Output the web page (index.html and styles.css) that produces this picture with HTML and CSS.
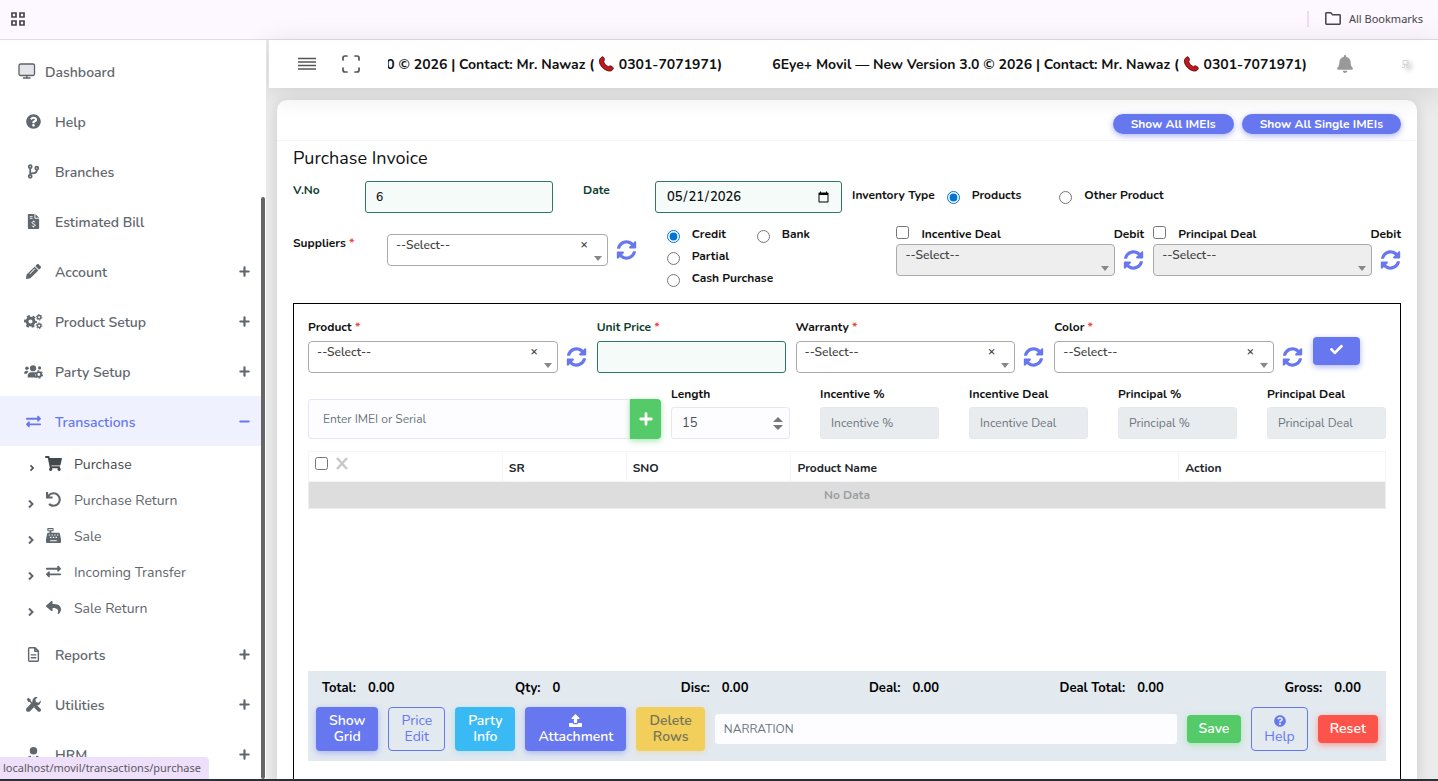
FILE: index.html
```
<!DOCTYPE html>
<html lang="en">
<head>
    <meta charset="UTF-8">
    <meta name="viewport" content="width=device-width, initial-scale=1.0">
    <title>Purchase Invoice</title>
    <link rel="stylesheet" href="styles.css">
</head>
<body>
    <!-- icon sprite -->
    <svg class="sprite" aria-hidden="true">
        <symbol id="i-help" viewBox="0 0 512 512"><path d="M504 256c0 136.997-111.043 248-248 248S8 392.997 8 256C8 119.083 119.043 8 256 8s248 111.083 248 248zM262.655 90c-54.497 0-89.255 22.957-116.549 63.758-3.536 5.286-2.353 12.415 2.715 16.258l34.699 26.31c5.205 3.947 12.621 3.008 16.665-2.122 17.864-22.658 30.113-35.797 57.303-35.797 20.429 0 45.698 13.148 45.698 32.958 0 14.976-12.363 22.667-32.534 33.976C247.128 238.528 216 254.941 216 296v4c0 6.627 5.373 12 12 12h56c6.627 0 12-5.373 12-12v-1.333c0-28.462 83.186-29.647 83.186-106.667 0-58.002-60.165-102-116.531-102zM256 338c-25.365 0-46 20.635-46 46 0 25.364 20.635 46 46 46s46-20.636 46-46c0-25.365-20.635-46-46-46z"/></symbol>
        <symbol id="i-branch" viewBox="0 0 16 16"><g fill="none" stroke="currentColor" stroke-width="1.9"><circle cx="4.5" cy="2.9" r="1.6"/><circle cx="4.5" cy="13.1" r="1.6"/><circle cx="11.5" cy="4.4" r="1.6"/><path d="M4.5 4.5v7M11.5 6v.8c0 2.4-1.500 2.700-3.500 2.900-1.800.2-3.500.4-3.500 1.800"/></g></symbol>
        <symbol id="i-bill" viewBox="0 0 384 512"><path fill-rule="evenodd" d="M24 0h200v136c0 13 11 24 24 24h136v328c0 13-11 24-24 24H24c-13 0-24-11-24-24V24C0 11 11 0 24 0zM64 64v32h96V64zm0 64v32h96v-32z"/><path d="M256 0v128h128L263 6z"/><path fill="none" stroke="#fff" stroke-width="32" d="M250 275c-20-18-110-28-110 22 0 58 110 30 110 86 0 52-90 44-116 22M192 224v32m0 168v32"/></symbol>
        <symbol id="i-pencil" viewBox="0 0 512 512"><path d="M497.900 142.100l-46.100 46.100c-4.700 4.700-12.300 4.700-17 0l-111-111c-4.700-4.700-4.700-12.300 0-17l46.100-46.100c18.700-18.700 49.100-18.700 67.900 0l60.100 60.100c18.800 18.700 18.800 49.100 0 67.900zM284.200 99.800L21.600 362.400.4 483.900c-2.900 16.400 11.400 30.600 27.800 27.800l121.500-21.300 262.600-262.600c4.700-4.700 4.700-12.300 0-17l-111-111c-4.800-4.700-12.400-4.700-17.100 0zM124.100 339.900c-5.500-5.500-5.500-14.300 0-19.800l154-154c5.500-5.500 14.300-5.500 19.800 0s5.500 14.300 0 19.800l-154 154c-5.500 5.500-14.300 5.500-19.800 0z"/></symbol>
        <symbol id="i-cogs" viewBox="0 0 20 16"><g fill="none" stroke="currentColor"><circle cx="6.800" cy="8" r="3.700" stroke-width="3"/><circle cx="6.800" cy="8" r="5.900" stroke-width="2" stroke-dasharray="3.100 3.080" stroke-dashoffset="1.500"/><circle cx="16" cy="3.500" r="1.900" stroke-width="1.500"/><circle cx="16" cy="3.500" r="3" stroke-width="1" stroke-dasharray="1.570 1.570"/><circle cx="16" cy="12.500" r="1.900" stroke-width="1.500"/><circle cx="16" cy="12.500" r="3" stroke-width="1" stroke-dasharray="1.570 1.570"/></g></symbol>
        <symbol id="i-users" viewBox="0 0 20 16"><circle cx="3" cy="4.600" r="1.900"/><circle cx="9.500" cy="4.500" r="3.300"/><circle cx="16.500" cy="4.200" r="1.700"/><path d="M0 10.500c0-2 1-3.200 2.500-3.200 1 0 1.800.2 2.300.7C3.500 9 3 10 2.800 10.500zM3.800 14.500v-1.700c0-2.400 1.500-3.900 3.700-3.900h3c.5 0 .9.100 1.300.2-.7 2 0 4.300 2 5.400z"/><circle cx="15.700" cy="11.200" r="2.500" fill="none" stroke="currentColor" stroke-width="2"/><circle cx="15.700" cy="11.200" r="3.900" fill="none" stroke="currentColor" stroke-width="1.200" stroke-dasharray="2.040 2.040"/></symbol>
        <symbol id="i-exchange" viewBox="0 0 512 512"><path d="M0 168v-16c0-13.255 10.745-24 24-24h360V80c0-21.367 25.899-32.042 40.971-16.971l80 80c9.372 9.373 9.372 24.569 0 33.941l-80 80C409.956 271.982 384 261.456 384 240v-48H24c-13.255 0-24-10.745-24-24zm488 152H128v-48c0-21.314-25.862-32.080-40.971-16.971l-80 80c-9.372 9.373-9.372 24.569 0 33.941l80 80C102.057 463.997 128 453.437 128 432v-48h360c13.255 0 24-10.745 24-24v-16c0-13.255-10.745-24-24-24z"/></symbol>
        <symbol id="i-cart" viewBox="0 0 576 512"><path d="M528.120 301.319l47.273-208C578.806 78.301 567.391 64 551.990 64H159.208l-9.166-44.810C147.758 8.021 137.930 0 126.529 0H24C10.745 0 0 10.745 0 24v16c0 13.255 10.745 24 24 24h69.883l70.248 343.435C147.325 417.100 136 435.222 136 456c0 30.928 25.072 56 56 56s56-25.072 56-56c0-15.674-6.447-29.835-16.824-40h209.647C430.447 426.165 424 440.326 424 456c0 30.928 25.072 56 56 56s56-25.072 56-56c0-22.172-12.888-41.332-31.579-50.405l5.517-24.276c3.413-15.018-8.002-29.319-23.403-29.319H218.117l-6.545-32h293.145c11.206 0 20.920-7.754 23.403-18.681z"/></symbol>
        <symbol id="i-undo" viewBox="0 0 512 512"><path d="M212.333 224.333H12c-6.627 0-12-5.373-12-12V12C0 5.373 5.373 0 12 0h48c6.627 0 12 5.373 12 12v78.112C117.773 39.279 184.260 7.470 258.175 8.007c136.906.994 246.448 111.623 246.157 248.532C504.041 393.258 393.120 504 256.333 504c-64.089 0-122.496-24.313-166.510-64.215-5.099-4.622-5.334-12.554-.467-17.420l33.967-33.967c4.474-4.474 11.662-4.717 16.401-.525C170.760 415.336 211.580 432 256.333 432c97.268 0 176-78.716 176-176 0-97.267-78.716-176-176-176-58.496 0-110.280 28.476-142.274 72.333h98.274c6.627 0 12 5.373 12 12v48c0 6.627-5.373 12-12 12z"/></symbol>
        <symbol id="i-register" viewBox="0 0 16 16"><path fill-rule="evenodd" d="M1.500 0h6.500v3.500H5.800V5h7.700c.7 0 1.200.5 1.300 1.200L16 12v3c0 .6-.4 1-1 1H1c-.6 0-1-.4-1-1v-3l1.200-5.800C1.300 5.500 1.800 5 2.500 5h1.300V3.500H1.500zM2.500 1.200v1.100H7V1.200zM3 6.800v1.300h1.400V6.800zm2.900 0v1.300h1.400V6.800zm2.900 0v1.300h1.400V6.800zm2.900 0v1.300h1.400V6.800zM4.400 9.400v1.300h1.400V9.400zm2.900 0v1.300h1.400V9.400zm2.900 0v1.300h1.400V9.400zM4.500 13v1h7v-1z"/></symbol>
        <symbol id="i-reply" viewBox="0 0 512 512"><path d="M8.309 189.836L184.313 37.851C199.719 24.546 224 35.347 224 56.015v80.053c160.629 1.839 288 34.032 288 186.258 0 61.441-39.581 122.309-83.333 154.132-13.653 9.931-33.111-2.533-28.077-18.631 45.344-145.012-21.507-183.510-176.590-185.742V360c0 20.700-24.300 31.453-39.687 18.164l-176.004-152c-11.071-9.562-11.086-26.753 0-36.328z"/></symbol>
        <symbol id="i-file" viewBox="0 0 12 16"><path fill="none" stroke="currentColor" stroke-width="1.500" stroke-linejoin="round" d="M1.800.8h5.900l3.500 3.500v9.900c0 .6-.4 1-1 1H1.800c-.6 0-1-.4-1-1V1.800c0-.6.4-1 1-1zM7.400.8v3.800h3.800M3 8.400h6M3 11.400h6"/></symbol>
        <symbol id="i-tools" viewBox="0 0 16 16"><path d="M.8 2.300L2.300.8 5 2.700v1.600l2.900 2.900-1 1L4 5.300H2.600zM9.600 8.800l1.600-.6 4.200 4.200c.8.8.8 2 0 2.800s-2 .8-2.800 0L8.600 11.200z"/><path d="M15.700 3.600L13.400 6l-2.700-.7L10 2.600 12.400.3c-1.600-.5-3.400-.1-4.500 1.200-1 1-1.300 2.500-1 3.800L.7 11.600c-.9.900-.9 2.400 0 3.500 1 1 2.600 1 3.600 0l6.200-6.200c1.400.4 2.900 0 3.900-1 1.200-1.200 1.700-2.800 1.300-4.300z"/></symbol>
        <symbol id="i-user" viewBox="0 0 14 16"><circle cx="7" cy="4" r="4"/><path d="M4 9.200L6.300 15l.5-3.200L6 10.400h2l-.8 1.400.5 3.200L10 9.200c2.400.1 4 1.800 4 4.100v1.200c0 .8-.7 1.500-1.500 1.500h-11C.7 16 0 15.300 0 14.500v-1.200c0-2.300 1.600-4 4-4.100z"/></symbol>
        <symbol id="i-bell" viewBox="0 0 448 512"><path d="M224 512c35.320 0 63.970-28.650 63.970-64H160.030c0 35.350 28.650 64 63.970 64zm215.390-149.710c-19.320-20.760-55.470-51.990-55.470-154.290 0-77.700-54.480-139.900-127.940-155.160V32c0-17.670-14.320-32-31.980-32s-31.980 14.330-31.980 32v20.840C118.560 68.100 64.080 130.300 64.080 208c0 102.300-36.150 133.530-55.470 154.290-6 6.450-8.660 14.160-8.610 21.710.11 16.400 12.980 32 32.100 32h383.800c19.120 0 32-15.600 32.100-32 .05-7.550-2.610-15.270-8.610-21.710z"/></symbol>
        <symbol id="i-sync" viewBox="0 0 512 512"><path d="M370.720 133.280C339.458 104.008 298.888 87.962 255.848 88c-77.458.068-144.328 53.178-162.791 126.850-1.344 5.363-6.122 9.150-11.651 9.150H24.103c-7.498 0-13.194-6.807-11.807-14.176C33.933 94.924 134.813 8 256 8c66.448 0 126.791 26.136 171.315 68.685L463.030 40.970C478.149 25.851 504 36.559 504 57.941V192c0 13.255-10.745 24-24 24H345.941c-21.382 0-32.090-25.851-16.971-40.971l41.750-41.749zM32 296h134.059c21.382 0 32.090 25.851 16.971 40.971l-41.750 41.750c31.262 29.273 71.835 45.319 114.876 45.280 77.418-.070 144.315-53.144 162.787-126.849 1.344-5.363 6.122-9.150 11.651-9.150h57.304c7.498 0 13.194 6.807 11.807 14.176C478.067 417.076 377.187 504 256 504c-66.448 0-126.791-26.136-171.315-68.685L48.970 471.030C33.851 486.149 8 475.441 8 454.059V320c0-13.255 10.745-24 24-24z"/></symbol>
        <symbol id="i-check" viewBox="0 0 512 512"><path d="M173.898 439.404l-166.400-166.400c-9.997-9.997-9.997-26.206 0-36.204l36.203-36.204c9.997-9.998 26.207-9.998 36.204 0L192 312.690 432.095 72.596c9.997-9.997 26.207-9.997 36.204 0l36.203 36.204c9.997 9.997 9.997 26.206 0 36.204l-294.400 294.401c-9.998 9.997-26.207 9.997-36.204-.001z"/></symbol>
        <symbol id="i-plus" viewBox="0 0 12 12"><path fill="none" stroke="currentColor" stroke-width="2.400" stroke-linecap="round" d="M6 1.500v9M1.500 6h9"/></symbol>
        <symbol id="i-minus" viewBox="0 0 12 12"><path fill="none" stroke="currentColor" stroke-width="2.400" stroke-linecap="round" d="M1.500 6h9"/></symbol>
        <symbol id="i-chevron" viewBox="0 0 8 10"><path fill="none" stroke="currentColor" stroke-width="2" d="M2 1.500L5.500 5 2 8.500"/></symbol>
        <symbol id="i-upload" viewBox="0 0 16 16"><path d="M8 0l4.800 4.900c.4.400.1 1.100-.5 1.100H10v4.300c0 .4-.3.700-.7.700H6.700c-.4 0-.7-.3-.7-.7V6H3.700c-.6 0-.9-.7-.5-1.100zM1 11h3.800c.1 1 .9 1.500 1.900 1.500h2.600c1 0 1.800-.5 1.900-1.500H15c.6 0 1 .4 1 1v3c0 .6-.4 1-1 1H1c-.6 0-1-.4-1-1v-3c0-.6.4-1 1-1z"/></symbol>
        <symbol id="i-phone" viewBox="0 0 16 16"><path fill="#c4161c" stroke="#3a0a0a" stroke-width=".8" d="M3.800.8c.8-.5 1.700.9 2.100 2.100.4 1.100-.1 1.700-.8 2.300.5 2.600 2.700 4.800 5.100 5.500.7-.8 1.400-1.100 2.400-.6 1.200.6 2.700 1.700 2.200 2.600-.8 1.700-2.400 2.600-4.500 2.300C5.400 14.200.9 9.200.9 5.200.9 3.300 2 1.700 3.800.8z"/></symbol>
    </svg>

    <header class="bookmarks-bar">
        <svg class="apps-icon" viewBox="0 0 14 14"><path fill="none" stroke="#47454a" stroke-width="1.700" d="M1 1h4v4H1zM9 1h4v4H9zM1 9h4v4H1zM9 9h4v4H9z"/></svg>
        <a href="#" class="all-bookmarks">
            <svg viewBox="0 0 16 13"><path fill="none" stroke="#47454a" stroke-width="1.500" stroke-linejoin="round" d="M.8 11.500V1.500c0-.4.300-.7.700-.7h4.300l1.800 2h6.900c.4 0 .7.300.7.700v8c0 .4-.3.700-.7.700h-13c-.4 0-.7-.3-.7-.7z"/></svg>
            All Bookmarks
        </a>
    </header>

    <div class="app">
        <aside class="sidebar">
            <nav class="menu">
                <a href="#" class="menu-item dashboard">
                    <svg viewBox="0 0 18 16"><rect x="1" y="1" width="15.500" height="11.500" rx="1.500" fill="#e4e5e9" stroke="#5c6166" stroke-width="1.300"/><path stroke="#5c6166" stroke-width="1.300" d="M8.800 12.500V15M5 15h7.500"/></svg>
                    <span>Dashboard</span>
                </a>
                <a href="#" class="menu-item"><svg><use href="#i-help"/></svg><span>Help</span></a>
                <a href="#" class="menu-item"><svg><use href="#i-branch"/></svg><span>Branches</span></a>
                <a href="#" class="menu-item"><svg><use href="#i-bill"/></svg><span>Estimated Bill</span></a>
                <a href="#" class="menu-item"><svg><use href="#i-pencil"/></svg><span>Account</span><svg class="toggle"><use href="#i-plus"/></svg></a>
                <a href="#" class="menu-item"><svg><use href="#i-cogs"/></svg><span>Product Setup</span><svg class="toggle"><use href="#i-plus"/></svg></a>
                <a href="#" class="menu-item"><svg><use href="#i-users"/></svg><span>Party Setup</span><svg class="toggle"><use href="#i-plus"/></svg></a>
                <a href="#" class="menu-item active"><svg><use href="#i-exchange"/></svg><span>Transactions</span><svg class="toggle"><use href="#i-minus"/></svg></a>
                <div class="submenu">
                    <a href="#" class="hovered"><svg class="chevron"><use href="#i-chevron"/></svg><svg><use href="#i-cart"/></svg><span>Purchase</span></a>
                    <a href="#"><svg class="chevron"><use href="#i-chevron"/></svg><svg><use href="#i-undo"/></svg><span>Purchase Return</span></a>
                    <a href="#"><svg class="chevron"><use href="#i-chevron"/></svg><svg><use href="#i-register"/></svg><span>Sale</span></a>
                    <a href="#"><svg class="chevron"><use href="#i-chevron"/></svg><svg><use href="#i-exchange"/></svg><span>Incoming Transfer</span></a>
                    <a href="#"><svg class="chevron"><use href="#i-chevron"/></svg><svg><use href="#i-reply"/></svg><span>Sale Return</span></a>
                </div>
                <a href="#" class="menu-item"><svg><use href="#i-file"/></svg><span>Reports</span><svg class="toggle"><use href="#i-plus"/></svg></a>
                <a href="#" class="menu-item"><svg><use href="#i-tools"/></svg><span>Utilities</span><svg class="toggle"><use href="#i-plus"/></svg></a>
                <a href="#" class="menu-item"><svg><use href="#i-user"/></svg><span>HRM</span><svg class="toggle"><use href="#i-plus"/></svg></a>
            </nav>
            <div class="scroll-track"><div class="scroll-thumb"></div></div>
        </aside>

        <div class="content">
            <div class="navbar">
                <button type="button" class="icon-btn" aria-label="Toggle menu"><svg width="18" height="14" viewBox="0 0 18 14"><path stroke="#555" stroke-width="1.500" d="M0 1.500h18M0 5h18M0 8.500h18M0 12h18"/></svg></button>
                <button type="button" class="icon-btn" aria-label="Full screen"><svg width="18" height="18" viewBox="0 0 18 18"><path fill="none" stroke="#555" stroke-width="1.700" stroke-linecap="round" d="M1 5V3c0-1.200.8-2 2-2h2M13 1h2c1.200 0 2 .8 2 2v2M17 13v2c0 1.200-.8 2-2 2h-2M5 17H3c-1.200 0-2-.8-2-2v-2"/></svg></button>
                <div class="marquee">
                    <span>6Eye+ Movil — New Version 3.0 © 2026 | Contact: Mr. Nawaz ( <svg><use href="#i-phone"/></svg> 0301-7071971)</span>
                    <span>6Eye+ Movil — New Version 3.0 © 2026 | Contact: Mr. Nawaz ( <svg><use href="#i-phone"/></svg> 0301-7071971)</span>
                </div>
                <button type="button" class="icon-btn bell" aria-label="Notifications"><svg width="16" height="18"><use href="#i-bell"/></svg></button>
                <a href="#" class="avatar" aria-label="Profile"><svg width="10" height="10" viewBox="0 0 10 10"><path fill="none" stroke="#d5d5d5" d="M2 1.500h5v4H2zM1 8.500h2.500V6M8 8.500H6V6"/></svg></a>
            </div>

            <main class="card">
                <div class="card-header">
                    <button type="button" class="pill">Show All IMEIs</button>
                    <button type="button" class="pill">Show All Single IMEIs</button>
                </div>

                <form class="card-body">
                    <h1>Purchase Invoice</h1>

                    <div class="row-voucher">
                        <label for="vno" class="valid">V.No</label>
                        <input type="text" id="vno" class="field valid-field" value="6">
                        <label for="date" class="valid date-label">Date</label>
                        <input type="date" id="date" class="field valid-field" value="2026-05-21">
                        <div class="inventory">
                            <span>Inventory Type</span>
                            <label class="option"><input type="radio" name="inventory" checked>Products</label>
                            <label class="option"><input type="radio" name="inventory">Other Product</label>
                        </div>
                    </div>

                    <div class="row-supplier">
                        <label for="supplier">Suppliers <i>*</i></label>
                        <div class="select-group supplier-select">
                            <div class="select">
                                <select id="supplier"><option>--Select--</option></select>
                                <button type="button" class="clear" aria-label="Clear">×</button>
                            </div>
                            <button type="button" class="sync" aria-label="Refresh"><svg><use href="#i-sync"/></svg></button>
                        </div>
                        <div class="payment">
                            <label class="option"><input type="radio" name="payment" checked>Credit</label>
                            <label class="option"><input type="radio" name="payment">Bank</label>
                            <label class="option"><input type="radio" name="payment">Partial</label>
                            <label class="option"><input type="radio" name="payment">Cash Purchase</label>
                        </div>
                        <div class="deal">
                            <div class="deal-head">
                                <label><input type="checkbox">Incentive Deal</label>
                                <span>Debit</span>
                            </div>
                            <div class="select-group">
                                <div class="select disabled"><select aria-label="Incentive Deal" disabled><option>--Select--</option></select></div>
                                <button type="button" class="sync" aria-label="Refresh"><svg><use href="#i-sync"/></svg></button>
                            </div>
                        </div>
                        <div class="deal">
                            <div class="deal-head">
                                <label><input type="checkbox">Principal Deal</label>
                                <span>Debit</span>
                            </div>
                            <div class="select-group">
                                <div class="select disabled"><select aria-label="Principal Deal" disabled><option>--Select--</option></select></div>
                                <button type="button" class="sync" aria-label="Refresh"><svg><use href="#i-sync"/></svg></button>
                            </div>
                        </div>
                    </div>

                    <section class="items">
                        <div class="row-product">
                            <div>
                                <label for="product">Product <i>*</i></label>
                                <div class="select-group">
                                    <div class="select">
                                        <select id="product"><option>--Select--</option></select>
                                        <button type="button" class="clear" aria-label="Clear">×</button>
                                    </div>
                                    <button type="button" class="sync" aria-label="Refresh"><svg><use href="#i-sync"/></svg></button>
                                </div>
                            </div>
                            <div>
                                <label for="price" class="valid">Unit Price <i>*</i></label>
                                <input type="text" id="price" class="field valid-field">
                            </div>
                            <div>
                                <label for="warranty">Warranty <i>*</i></label>
                                <div class="select-group">
                                    <div class="select">
                                        <select id="warranty"><option>--Select--</option></select>
                                        <button type="button" class="clear" aria-label="Clear">×</button>
                                    </div>
                                    <button type="button" class="sync" aria-label="Refresh"><svg><use href="#i-sync"/></svg></button>
                                </div>
                            </div>
                            <div>
                                <label for="color">Color <i>*</i></label>
                                <div class="select-group">
                                    <div class="select">
                                        <select id="color"><option>--Select--</option></select>
                                        <button type="button" class="clear" aria-label="Clear">×</button>
                                    </div>
                                    <button type="button" class="sync" aria-label="Refresh"><svg><use href="#i-sync"/></svg></button>
                                </div>
                            </div>
                            <button type="button" class="btn primary confirm" aria-label="Confirm"><svg width="13" height="13"><use href="#i-check"/></svg></button>
                        </div>

                        <div class="row-serial">
                            <div class="serial">
                                <input type="text" class="field" placeholder="Enter IMEI or Serial" aria-label="IMEI or Serial">
                                <button type="button" class="add" aria-label="Add"><svg width="14" height="14"><use href="#i-plus"/></svg></button>
                            </div>
                            <div>
                                <label for="length">Length</label>
                                <div class="number"><input type="number" id="length" class="field" value="15"></div>
                            </div>
                            <div>
                                <label for="incPct">Incentive %</label>
                                <input type="text" id="incPct" class="field" placeholder="Incentive %" disabled>
                            </div>
                            <div>
                                <label for="incDeal">Incentive Deal</label>
                                <input type="text" id="incDeal" class="field" placeholder="Incentive Deal" disabled>
                            </div>
                            <div>
                                <label for="prPct">Principal %</label>
                                <input type="text" id="prPct" class="field" placeholder="Principal %" disabled>
                            </div>
                            <div>
                                <label for="prDeal">Principal Deal</label>
                                <input type="text" id="prDeal" class="field" placeholder="Principal Deal" disabled>
                            </div>
                        </div>

                        <div class="table-wrap">
                            <table>
                                <colgroup>
                                    <col class="c-check"><col class="c-sr"><col class="c-sno"><col class="c-name"><col>
                                </colgroup>
                                <thead>
                                    <tr>
                                        <th class="check-cell"><input type="checkbox" aria-label="Select all"><svg width="12" height="13" viewBox="0 0 12 13"><path stroke="#c8c8c8" stroke-width="2.500" d="M1 1l10 11M11 1L1 12"/></svg></th>
                                        <th>SR</th>
                                        <th>SNO</th>
                                        <th>Product Name</th>
                                        <th>Action</th>
                                    </tr>
                                </thead>
                                <tbody>
                                    <tr><td colspan="5">No Data</td></tr>
                                </tbody>
                            </table>
                        </div>

                        <div class="summary">
                            <div class="totals">
                                <div><span>Total:</span><span>0.00</span></div>
                                <div><span>Qty:</span><span>0</span></div>
                                <div><span>Disc:</span><span>0.00</span></div>
                                <div><span>Deal:</span><span>0.00</span></div>
                                <div><span>Deal Total:</span><span>0.00</span></div>
                                <div><span>Gross:</span><span>0.00</span></div>
                            </div>
                            <div class="actions">
                                <button type="button" class="btn primary">Show<br>Grid</button>
                                <button type="button" class="btn outline">Price<br>Edit</button>
                                <button type="button" class="btn info">Party<br>Info</button>
                                <button type="button" class="btn primary"><svg width="13" height="13"><use href="#i-upload"/></svg><br>Attachment</button>
                                <button type="button" class="btn warning" disabled>Delete<br>Rows</button>
                                <input type="text" class="narration" placeholder="NARRATION" aria-label="Narration">
                                <button type="submit" class="btn single success">Save</button>
                                <button type="button" class="btn outline"><svg width="12" height="12"><use href="#i-help"/></svg><br>Help</button>
                                <button type="reset" class="btn single danger">Reset</button>
                            </div>
                        </div>
                    </section>
                </form>
            </main>
        </div>
    </div>

    <div class="status-url">localhost/movil/transactions/purchase</div>
    <div class="taskbar-edge"></div>
</body>
</html>
```
FILE: styles.css
```
* {
    box-sizing: border-box;
}
body {
    margin: 0;
    height: 100vh;
    overflow: hidden;
    display: flex;
    flex-direction: column;
    font-family: Nunito, Lato, sans-serif;
    font-size: 12px;
    font-weight: 700;
    line-height: 16px;
    color: #111;
    background: #ebebeb;
}
a {
    color: inherit;
    text-decoration: none;
}
button, input, select {
    font: inherit;
    color: inherit;
}
button {
    cursor: pointer;
}
svg {
    fill: currentColor;
    flex: none;
}
label i {
    color: #f0483e;
    font-style: normal;
}
.sprite {
    position: absolute;
    width: 0;
    height: 0;
}

/* bookmarks bar */
.bookmarks-bar {
    flex: none;
    height: 40px;
    padding: 0 15px 2px 11px;
    display: flex;
    align-items: center;
    justify-content: space-between;
    background: #fdf7ff;
    border-bottom: 1px solid #dfdce3;
}
.apps-icon {
    width: 14px;
    height: 14px;
}
.all-bookmarks {
    display: flex;
    align-items: center;
    gap: 8px;
    padding-left: 16px;
    border-left: 2px solid #eadcfa;
    font-family: "Noto Sans", sans-serif;
    font-size: 11px;
    font-weight: 400;
    color: #47454a;
}
.all-bookmarks svg {
    width: 16px;
    height: 13px;
}

.app {
    flex: 1;
    min-height: 0;
    display: flex;
}

/* sidebar */
.sidebar {
    position: relative;
    z-index: 2;
    flex: none;
    width: 266px;
    display: flex;
    overflow: hidden;
    background: #fff;
}
.menu {
    flex: 1;
    padding-top: 6px;
}
.menu-item {
    display: flex;
    align-items: center;
    height: 50px;
    padding: 0 11px 0 24px;
    gap: 12px;
    font-size: 14px;
    font-weight: 600;
    color: #5f666d;
}
.menu-item svg {
    width: 19px;
    height: 15px;
}
.menu-item span {
    flex: 1;
    padding-top: 3px;
}
.menu-item .toggle {
    width: 11px;
    height: 11px;
}
.menu-item.dashboard {
    padding-left: 18px;
    gap: 9px;
}
.menu-item.dashboard svg {
    width: 18px;
    height: 16px;
}
.menu-item.active {
    color: #6777ef;
    background: #eff1fe;
}
.submenu {
    padding: 1px 0 2px;
}
.submenu a {
    display: flex;
    align-items: center;
    height: 36px;
    padding-left: 27px;
    gap: 12px;
    font-size: 14px;
    font-weight: 400;
    color: #5f666d;
}
.submenu a svg {
    width: 17px;
    height: 15px;
    margin-bottom: 4px;
}
.submenu a .chevron {
    width: 8px;
    height: 10px;
    margin: 6px -2px 0 0;
}
.submenu a.hovered .chevron {
    padding-left: 2px;
}
.submenu a.hovered {
    color: #43484d;
}
.scroll-track {
    width: 5px;
    display: flex;
    align-items: flex-end;
}
.scroll-thumb {
    width: 4px;
    height: 78.5%;
    margin-bottom: 2px;
    border-radius: 3px;
    background: #666;
}

/* main column */
.content {
    flex: 1;
    min-width: 0;
    display: flex;
    flex-direction: column;
    background: #ebebeb;
}
.navbar {
    flex: none;
    z-index: 1;
    height: 48px;
    margin-left: 3px;
    padding: 0 18px 0 24px;
    display: flex;
    align-items: center;
    background: #fff;
    box-shadow: 0 5px 30px rgba(0, 0, 0, 0.12);
}
.icon-btn {
    display: flex;
    justify-content: center;
    width: 28px;
    padding: 0;
    border: none;
    background: none;
    margin-right: 16px;
}
.marquee {
    flex: 1;
    min-width: 0;
    display: flex;
    justify-content: flex-end;
    gap: 50px;
    margin-left: 7px;
    padding-top: 2px;
    overflow: hidden;
    white-space: nowrap;
    font-size: 14px;
    line-height: 20px;
}
.marquee span {
    flex: none;
}
.marquee svg {
    width: 17px;
    height: 16px;
    vertical-align: -3px;
}
.icon-btn.bell {
    margin: 0 34px 0 24px;
    color: #999;
}
.avatar {
    display: flex;
    width: 27px;
    height: 10px;
    padding-left: 8px;
    filter: drop-shadow(3px 2px 2px rgba(0, 0, 0, 0.3));
}

.card {
    flex: 1;
    margin: 12px 21px 0 11px;
    display: flex;
    flex-direction: column;
    border-radius: 10px 10px 0 0;
    background: #fff;
    box-shadow: 0 4px 14px rgba(0, 0, 0, 0.14);
}
.card-header {
    display: flex;
    justify-content: flex-end;
    gap: 8px;
    height: 41px;
    padding: 14px 16px 0;
    border-bottom: 1px solid #f7f7f7;
}
.pill {
    height: 20px;
    padding: 0 18px;
    border: none;
    border-radius: 30px;
    line-height: 20px;
    color: #fff;
    background: #6777ef;
    box-shadow: 0 2px 6px #acb5f6;
}
.card-body {
    flex: 1;
    display: flex;
    flex-direction: column;
    padding: 6px 16px 0;
}
h1 {
    margin: 0 0 12px;
    font-size: 18px;
    font-weight: 400;
    line-height: 22px;
}

/* fields */
.field {
    width: 100%;
    height: 32px;
    padding: 0 10px;
    border: 1px solid #e4e6fc;
    border-radius: 3px;
    font-weight: 400;
    color: #495057;
    background: #fdfdff;
}
.field::placeholder,
.narration::placeholder {
    color: #6c757d;
    opacity: 1;
}
.field:disabled {
    border-color: #e4e8f0;
    background: #e9ecef;
}
.valid {
    color: #0d4030;
}
.valid-field {
    border-color: #2f7a5e;
    font-weight: 600;
    color: #111;
    background: #f5fbf9;
}
input[type="date"] {
    padding-right: 9px;
    font-size: 13px;
}
input[type="radio"],
input[type="checkbox"] {
    width: 13px;
    height: 13px;
    margin: 0;
    accent-color: #0075d5;
}
.select {
    position: relative;
    flex: 1;
    min-width: 0;
}
.select select {
    display: block;
    width: 100%;
    height: 32px;
    padding: 1px 8px 11px;
    border: 1px solid #aaa;
    border-radius: 4px;
    appearance: none;
    font-weight: 600;
    color: #444;
    background: #fff;
    opacity: 1;
}
.select.disabled select {
    background: #eee;
}
.select::after {
    content: "";
    position: absolute;
    right: 6px;
    bottom: 5px;
    border: 4px solid transparent;
    border-top: 5px solid #888;
    border-bottom: 0;
}
.clear {
    position: absolute;
    right: 18px;
    top: 2px;
    padding: 0 2px;
    border: none;
    color: #444;
    background: none;
}
.select-group {
    display: flex;
    align-items: center;
    gap: 8px;
}
.sync {
    display: flex;
    padding: 0;
    border: none;
    color: #6777ef;
    background: none;
}
.sync svg {
    width: 21px;
    height: 20px;
}
.option {
    display: flex;
    align-items: flex-start;
    gap: 12px;
}
.option input {
    margin-top: 4px;
}

/* voucher and supplier rows */
.row-voucher {
    display: grid;
    grid-template-columns: 72fr 188fr 102fr 187fr 559fr;
}
.row-voucher > label {
    padding-top: 1px;
}
.row-voucher > .date-label {
    padding-left: 30px;
}
.inventory {
    display: flex;
    padding: 6px 0 0 10px;
    gap: 12px;
}
.inventory .option:last-child {
    margin-left: 26px;
}
.row-supplier {
    display: grid;
    grid-template-columns: 94fr 250fr 260fr 248fr 257fr;
    margin-top: 9px;
    margin-bottom: 15px;
}
.row-supplier > * {
    min-width: 0;
}
.row-supplier > label {
    padding-top: 13px;
}
.supplier-select {
    align-self: start;
    margin-top: 12px;
}
.payment {
    display: grid;
    grid-template-columns: 90px 130px;
    align-content: start;
    padding: 4px 0 0 30px;
    height: 66px;
}
.payment .option {
    height: 22px;
}
.payment .option:nth-child(n+3) {
    grid-column: 1 / -1;
}
.deal:last-child {
    margin-left: 9px;
}
.deal-head {
    display: flex;
    justify-content: space-between;
    height: 22px;
    padding-top: 4px;
}
.deal-head label {
    display: flex;
    gap: 12px;
}

/* items box */
.items {
    flex: 1;
    display: flex;
    flex-direction: column;
    padding: 15px 14px 0;
    border: 1px solid #000;
    border-bottom: none;
}
.items label {
    display: block;
    margin-bottom: 6px;
}
.row-product {
    display: grid;
    grid-template-columns: 279fr 189fr 249fr 249fr 73fr;
    column-gap: 10px;
}
.row-serial {
    display: grid;
    grid-template-columns: 333fr 119fr 119fr 119fr 119fr 119fr;
    column-gap: 30px;
    margin-top: 13px;
}
.row-serial label {
    margin-bottom: 5px;
}
.serial {
    display: flex;
    margin: 13px -20px 0 0;
}
.serial .field {
    height: 40px;
    padding: 0 14px;
    border-radius: 3px 0 0 3px;
}
.add {
    flex: none;
    display: flex;
    align-items: center;
    justify-content: center;
    width: 31px;
    border: none;
    border-radius: 0 4px 4px 0;
    padding: 0;
    color: #fff;
    background: #54ca68;
    box-shadow: 0 2px 6px #a8e6b2;
}
.number {
    position: relative;
}
.number input {
    appearance: textfield;
    font-size: 13px;
}
.number::before,
.number::after {
    content: "";
    position: absolute;
    right: 7px;
    border: 5px solid transparent;
}
.number::before {
    top: 10px;
    border-top: 0;
    border-bottom-color: #777;
}
.number::after {
    bottom: 9px;
    border-bottom: 0;
    border-top-color: #777;
}

/* table */
.table-wrap {
    height: 220px;
    margin-top: 12px;
}
table {
    width: 100%;
    border-collapse: collapse;
    table-layout: fixed;
}
.c-check { width: 18%; }
.c-sr { width: 11.500%; }
.c-sno { width: 15.300%; }
.c-name { width: 36%; }
th {
    height: 30px;
    padding: 2px 6px 0;
    border: 1px solid #f3f4f5;
    text-align: left;
    color: #212529;
}
.check-cell input {
    margin-right: 8px;
}
.check-cell {
    padding: 0 6px 2px;
}
td {
    height: 27px;
    padding: 0;
    border: 1px solid #eee;
    text-align: center;
    color: #9b9fa3;
    background: #ddd;
}

/* summary footer */
.summary {
    padding: 9px 8px 10px;
    background: #e2e9ef;
}
.totals {
    display: flex;
    justify-content: space-between;
    padding: 0 17px 0 6px;
    margin-bottom: 11px;
    font-size: 13px;
    color: #000;
}
.totals div {
    display: flex;
    gap: 12px;
}
.actions {
    display: flex;
    align-items: center;
    gap: 10px;
}
.btn {
    flex: none;
    padding: 5px 12px;
    border: 1px solid transparent;
    border-radius: 4px;
    font-size: 14px;
    font-weight: 600;
    line-height: 16px;
    color: #fff;
}
.btn.single {
    padding: 5px 11px;
}
.actions .btn svg {
    vertical-align: -2px;
}
.primary {
    background: #6777ef;
    box-shadow: 0 2px 6px #acb5f6;
}
.outline {
    border-color: #6777ef;
    font-weight: 400;
    color: #6777ef;
    background: transparent;
}
.info {
    background: #3abaf4;
    box-shadow: 0 2px 6px #b5dff2;
}
.warning {
    color: #777458;
    background: #f2cf5b;
    box-shadow: 0 2px 6px #e6dcc0;
}
.success {
    background: #54ca68;
    box-shadow: 0 2px 6px #a8e6b2;
}
.danger {
    background: #fc544b;
    box-shadow: 0 2px 6px #fd9b96;
}
.confirm {
    align-self: start;
    justify-self: start;
    width: 47px;
    height: 28px;
    margin-top: 18px;
    padding: 0;
}
.narration {
    flex: 1;
    min-width: 0;
    height: 30px;
    padding: 0 9px;
    border: none;
    border-radius: 3px;
    font-weight: 400;
    background: #fdfdff;
}

/* browser status bubble */
.status-url {
    position: fixed;
    left: 0;
    bottom: 2px;
    z-index: 3;
    height: 22px;
    padding: 3px 8px 3px 3px;
    border-radius: 0 4px 0 0;
    font-family: "Noto Sans", sans-serif;
    font-size: 11px;
    font-weight: 400;
    color: #5d5862;
    background: #eee0fa;
}
.taskbar-edge {
    position: fixed;
    inset: auto 0 0;
    z-index: 3;
    height: 2px;
    background: #2c3036;
}
```
